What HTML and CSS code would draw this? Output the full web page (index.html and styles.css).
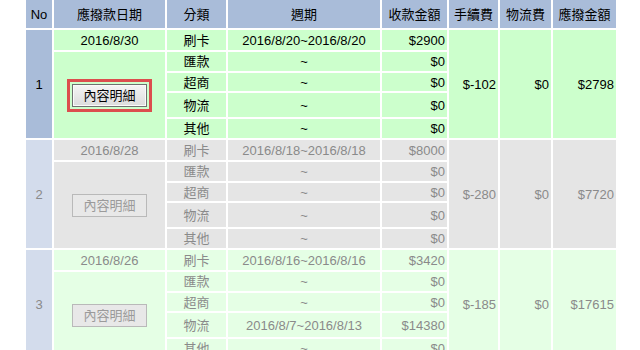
FILE: index.html
```html
<!DOCTYPE html>
<html lang="zh-Hant">
<head>
<meta charset="utf-8">
<title>應撥款明細</title>
<link rel="stylesheet" href="styles.css">
</head>
<body>
<table class="ledger">
  <colgroup>
    <col class="c-no"><col class="c-date"><col class="c-cat"><col class="c-period">
    <col class="c-amt"><col class="c-fee"><col class="c-ship"><col class="c-net">
  </colgroup>
  <thead>
    <tr class="head">
      <th>No</th><th>應撥款日期</th><th>分類</th><th>週期</th>
      <th>收款金額</th><th>手續費</th><th>物流費</th><th>應撥金額</th>
    </tr>
  </thead>
  <tbody class="grp active">
    <tr class="r1">
      <td class="no" rowspan="5">1</td>
      <td>2016/8/30</td><td>刷卡</td><td>2016/8/20~2016/8/20</td><td class="amt">$2900</td>
      <td class="amt" rowspan="5">$-102</td><td class="amt" rowspan="5">$0</td><td class="amt" rowspan="5">$2798</td>
    </tr>
    <tr class="r2">
      <td rowspan="4"><button class="detail focus" type="button">內容明細</button></td>
      <td>匯款</td><td>~</td><td class="amt">$0</td>
    </tr>
    <tr class="r3"><td>超商</td><td>~</td><td class="amt">$0</td></tr>
    <tr class="r4"><td>物流</td><td>~</td><td class="amt">$0</td></tr>
    <tr class="r5"><td>其他</td><td>~</td><td class="amt">$0</td></tr>
  </tbody>
  <tbody class="grp past gray">
    <tr class="r1">
      <td class="no" rowspan="5">2</td>
      <td>2016/8/28</td><td>刷卡</td><td>2016/8/18~2016/8/18</td><td class="amt">$8000</td>
      <td class="amt" rowspan="5">$-280</td><td class="amt" rowspan="5">$0</td><td class="amt" rowspan="5">$7720</td>
    </tr>
    <tr class="r2">
      <td rowspan="4"><button class="detail" type="button" disabled>內容明細</button></td>
      <td>匯款</td><td>~</td><td class="amt">$0</td>
    </tr>
    <tr class="r3"><td>超商</td><td>~</td><td class="amt">$0</td></tr>
    <tr class="r4"><td>物流</td><td>~</td><td class="amt">$0</td></tr>
    <tr class="r5"><td>其他</td><td>~</td><td class="amt">$0</td></tr>
  </tbody>
  <tbody class="grp past mint">
    <tr class="r1">
      <td class="no" rowspan="5">3</td>
      <td>2016/8/26</td><td>刷卡</td><td>2016/8/16~2016/8/16</td><td class="amt">$3420</td>
      <td class="amt" rowspan="5">$-185</td><td class="amt" rowspan="5">$0</td><td class="amt" rowspan="5">$17615</td>
    </tr>
    <tr class="r2">
      <td rowspan="4"><button class="detail" type="button" disabled>內容明細</button></td>
      <td>匯款</td><td>~</td><td class="amt">$0</td>
    </tr>
    <tr class="r3"><td>超商</td><td>~</td><td class="amt">$0</td></tr>
    <tr class="r4"><td>物流</td><td>2016/8/7~2016/8/13</td><td class="amt">$14380</td></tr>
    <tr class="r5"><td>其他</td><td>~</td><td class="amt">$0</td></tr>
  </tbody>
</table>
</body>
</html>
```

FILE: styles.css
```css
html, body {
  margin: 0;
  padding: 0;
  background: #ffffff;
  overflow: hidden;
}

body {
  font-family: "Liberation Sans", Arial, "Noto Sans CJK TC", sans-serif;
  font-size: 13px;
  color: #000000;
}

.ledger {
  border-collapse: separate;
  border-spacing: 2px;
  table-layout: fixed;
  width: 594px;
  margin: -2px 0 0 24px;
}

.c-no { width: 26px; }
.c-date { width: 111px; }
.c-cat { width: 59px; }
.c-period { width: 152px; }
.c-amt { width: 65px; }
.c-fee { width: 49px; }
.c-ship { width: 51px; }
.c-net { width: 63px; }

.ledger th,
.ledger td {
  padding: 0;
  text-align: center;
  vertical-align: middle;
  font-weight: normal;
  line-height: 15px;
  white-space: nowrap;
}

.ledger td.amt {
  text-align: right;
  padding-right: 2px;
}

.head th {
  height: 28px;
  background: #a9bcd9;
  color: #000000;
}

.r1 { height: 20px; }
.r2 { height: 19px; }
.r3 { height: 18px; }
.r4 { height: 24px; }
.r5 { height: 19px; }

.active td { background: #ccffcc; color: #000000; }
.active td.no { background: #a9bcd9; }

.gray td { background: #e5e5e5; color: #8a8a8a; }
.mint td { background: #e5ffe5; color: #8a8a8a; }
.past td.no { background: #d3dcec; }

.detail {
  width: 75px;
  height: 23px;
  padding: 0;
  margin: 0;
  font-family: "Liberation Sans", Arial, "Noto Sans CJK TC", sans-serif;
  font-size: 13px;
  line-height: 15px;
  color: #000000;
  border: 1px solid #707070;
  border-radius: 0;
  background: linear-gradient(#f5f5f5, #dcdcdc);
  box-shadow: inset 0 0 0 1px #fbfbfb;
}

.detail.focus {
  outline: 3px solid #dc4e4e;
  outline-offset: 2px;
}

.detail:disabled {
  color: #9a9a9a;
  border-color: #b9b9b9;
  background: #e8e8e8;
  box-shadow: none;
}
```
